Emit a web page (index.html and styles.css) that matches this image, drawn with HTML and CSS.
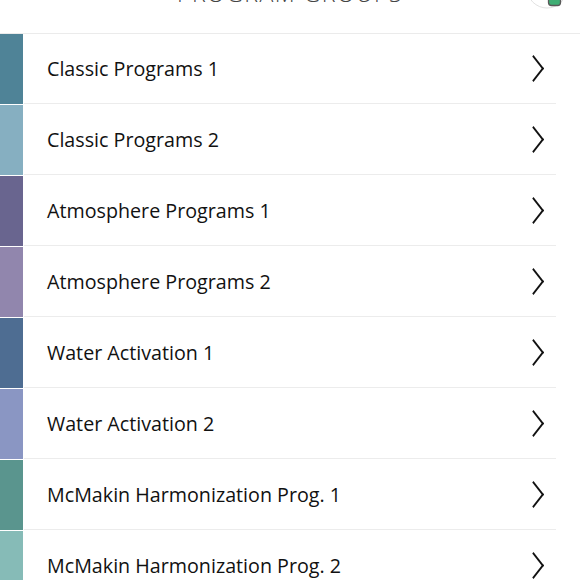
FILE: index.html
```html
<!DOCTYPE html>
<html lang="en">
<head>
  <meta charset="UTF-8">
  <title>Program Groups</title>
  <link rel="stylesheet" href="styles.css">
</head>
<body>
  <header class="top-bar">
    <h1 class="title">PROGRAM GROUPS</h1>
    <span class="avatar">
      <svg width="44" height="20" viewBox="0 0 44 20">
        <circle cx="20" cy="-12" r="20" fill="#fff" stroke="#e2e2e2" stroke-width="1"/>
        <rect x="21.5" y="-6" width="12" height="11.5" rx="3" fill="#3fae74" stroke="#5a5a5a" stroke-width="1.3"/>
      </svg>
    </span>
  </header>

  <ul class="group-list">
    <li class="group-row"><span class="swatch" style="background:#4f8397"></span><a class="group-link" href="#"><span>Classic Programs 1</span><i class="chev"></i></a></li>
    <li class="group-row"><span class="swatch" style="background:#86afc1"></span><a class="group-link" href="#"><span>Classic Programs 2</span><i class="chev"></i></a></li>
    <li class="group-row"><span class="swatch" style="background:#69658f"></span><a class="group-link" href="#"><span>Atmosphere Programs 1</span><i class="chev"></i></a></li>
    <li class="group-row"><span class="swatch" style="background:#9186ad"></span><a class="group-link" href="#"><span>Atmosphere Programs 2</span><i class="chev"></i></a></li>
    <li class="group-row"><span class="swatch" style="background:#4e6d92"></span><a class="group-link" href="#"><span>Water Activation 1</span><i class="chev"></i></a></li>
    <li class="group-row"><span class="swatch" style="background:#8a96c3"></span><a class="group-link" href="#"><span>Water Activation 2</span><i class="chev"></i></a></li>
    <li class="group-row"><span class="swatch" style="background:#5a958e"></span><a class="group-link" href="#"><span>McMakin Harmonization Prog. 1</span><i class="chev"></i></a></li>
    <li class="group-row"><span class="swatch" style="background:#86bbb7"></span><a class="group-link" href="#"><span>McMakin Harmonization Prog. 2</span><i class="chev"></i></a></li>
  </ul>
</body>
</html>
```

FILE: styles.css
```css
html, body { margin: 0; padding: 0; background: #fff; }
body { font-family: "Open Sans", "Noto Sans", sans-serif; color: #111; overflow: hidden; }

.top-bar {
  position: relative;
  height: 33px;
  border-bottom: 1px solid #ebebeb;
  overflow: hidden;
}
.title {
  margin: -20px 0 0 0;
  text-align: center;
  font-size: 23px;
  font-weight: 300;
  letter-spacing: 1.5px;
  color: #444;
  line-height: 26px;
}
.avatar { position: absolute; left: 527px; top: 0; }
.avatar svg { display: block; }

.group-list { list-style: none; margin: 0; padding: 0; }
.group-row {
  display: flex;
  height: 71px;
}
.swatch {
  width: 23px;
  height: 70px;
  flex-shrink: 0;
}
.group-link {
  display: flex;
  align-items: center;
  justify-content: space-between;
  width: 532px;
  height: 70px;
  margin-left: 1px;
  padding: 0 8px 0 23px;
  box-sizing: border-box;
  border-bottom: 1px solid #ececec;
  color: #111;
  text-decoration: none;
  font-size: 19.7px;
}
.chev {
  width: 15px;
  height: 15px;
  border-right: 2px solid #111;
  border-top: 2px solid #111;
  transform: rotate(45deg) skew(7deg, 7deg);
  margin-right: 6px;
}
```
